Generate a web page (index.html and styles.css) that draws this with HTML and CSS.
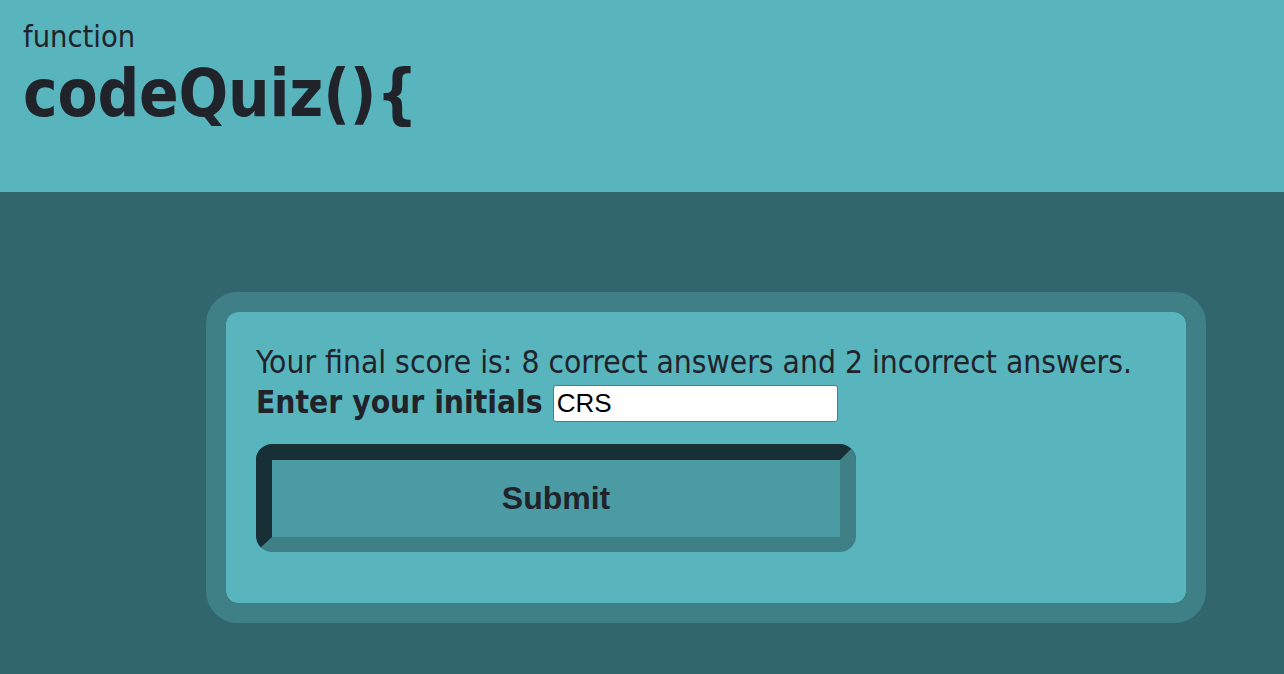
FILE: index.html
```html
<!DOCTYPE html>
<html lang="en">
<head>
<meta charset="utf-8">
<title>codeQuiz</title>
<link rel="stylesheet" href="styles.css">
</head>
<body>
<header class="top">
  <p class="kw">function</p>
  <h1 class="title">codeQuiz(){</h1>
</header>
<main class="stage">
  <section class="card">
    <p class="score">Your final score is: 8 correct answers and 2 incorrect answers.</p>
    <label class="initials"><span class="label-text">Enter your initials</span> <input class="field" type="text" value="CRS"></label>
    <button class="submit" type="button">Submit</button>
  </section>
</main>
</body>
</html>
```
FILE: styles.css
```css
html, body {
  margin: 0;
  padding: 0;
}
body {
  background: #31666c;
  color: #21232b;
  font-family: "DejaVu Sans Condensed", "DejaVu Sans", sans-serif;
  height: 674px;
  overflow: hidden;
}
.top {
  background: #59b5bd;
  height: 192px;
  box-sizing: border-box;
  padding: 18px 23px 0;
}
.kw {
  margin: 0;
  font-size: 30.5px;
  line-height: 38px;
}
.title {
  margin: 0;
  font-size: 65px;
  line-height: 76px;
  font-weight: bold;
  letter-spacing: -0.2px;
}
.stage {
  padding: 100px 0 0 206px;
}
.card {
  box-sizing: border-box;
  width: 1000px;
  height: 331px;
  border: 20px solid #3e8086;
  border-radius: 32px;
  background: #59b5bd;
  background-clip: padding-box;
  padding: 30px 30px 50px;
}
.score {
  margin: 0;
  font-size: 31.5px;
  line-height: 40px;
}
.initials {
  display: flex;
  align-items: center;
  gap: 10px;
  font-size: 31.5px;
  line-height: 40px;
  font-weight: bold;
}
.field {
  width: 285px;
  height: 37px;
  margin-top: 3px;
  box-sizing: border-box;
  border: 1px solid #6f6f6f;
  border-radius: 3px;
  font-family: "Liberation Sans", Arial, sans-serif;
  font-size: 26px;
  padding: 0 3px;
  color: #000;
  background: #fff;
}
.submit {
  display: block;
  margin-top: 22px;
  width: 600px;
  height: 108px;
  box-sizing: border-box;
  border-style: solid;
  border-width: 16px 16px 15px 16px;
  border-color: #183035 #3e8086 #3e8086 #183035;
  border-radius: 16px;
  background: #4b9ba4;
  color: #21232b;
  font-family: "Liberation Sans", Arial, sans-serif;
  font-weight: bold;
  font-size: 32px;
}
```
